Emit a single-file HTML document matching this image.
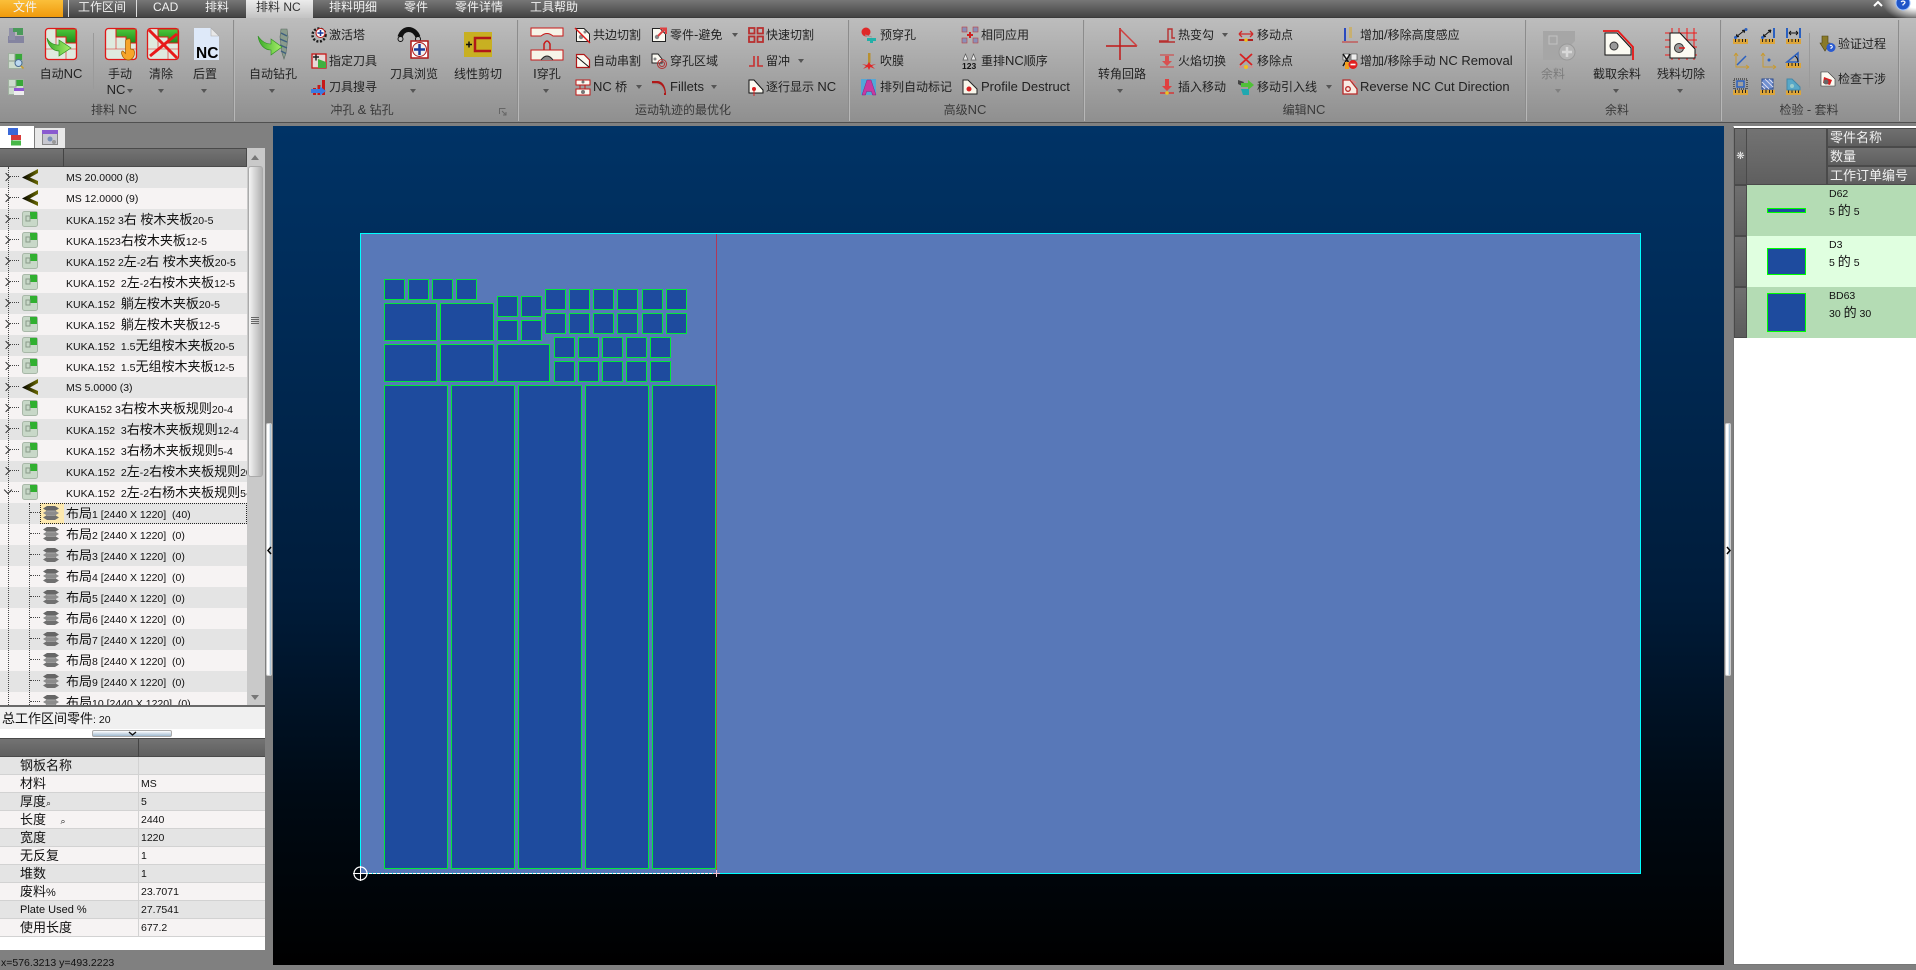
<!DOCTYPE html>
<html lang="zh"><head><meta charset="utf-8"><title>排料 NC</title>
<style>
*{box-sizing:border-box}
html,body{margin:0;padding:0}
body{width:1916px;height:965px;position:relative;overflow:hidden;background:#808080;font-family:"Liberation Sans","Noto Sans CJK SC",sans-serif;color:#1c1c1c}
.a{position:absolute}
#tabs{left:0;top:0;width:1916px;height:18px;background:linear-gradient(#767676,#434343);border-bottom:1px solid #3a3a3a}
.tb{position:absolute;top:-1px;line-height:17px;font-size:12px;color:#f2f2f2;white-space:pre}
#rib{left:0;top:18px;width:1916px;height:105px;background:linear-gradient(#bdbdbd,#8f8f8f);border-bottom:1px solid #505050}
.s{position:absolute;top:20px;height:101px;width:2px;background:linear-gradient(90deg,#777,#ccc)}
.t{position:absolute;font-size:12px;line-height:16px;white-space:pre;color:#222}
.c{transform:translateX(-50%)}
.t e,.vv e{font-size:13px}
e{font-style:normal}
.g{color:#3a3a3a;top:102px}
.v{position:absolute;width:0;height:0;border-left:3.5px solid transparent;border-right:3.5px solid transparent;border-top:4px solid #555}
#cv{left:273px;top:126px;width:1451px;height:839px;background:linear-gradient(#003366 0%,#002a55 24%,#001c3a 56%,#000a14 80%,#000 100%)}
#tree{left:0;top:167px;width:247px;height:538px;overflow:hidden;background:#f6f3f3}
#tree p{margin:0;position:relative;height:21px;font-size:10.5px;line-height:22px;white-space:pre;color:#111;overflow:hidden}
#tree p:nth-child(odd){background:#e4e4e4}
#tree p:nth-child(even){background:#f6f3f3}
#tree c{font-size:13px;color:#111}
#tree span{position:absolute;left:66px;top:0}
#tree svg{position:absolute;left:22px;top:2px;width:16px;height:16px}
#tree p.l svg{left:43px}
#tree p.l span{left:66px}
#tree p::after{content:"";position:absolute;left:10px;top:9px;width:9px;border-top:1px dotted #444}
#tree p.l::after{left:30px;width:10px}
#tree p.k::before{content:"";position:absolute;left:3px;top:7px;width:5px;height:5px;border-top:1.5px solid #333;border-right:1.5px solid #333;transform:rotate(45deg)}
#tree p.x::before{content:"";position:absolute;left:5px;top:5px;width:5px;height:5px;border-top:1.5px solid #333;border-right:1.5px solid #333;transform:rotate(135deg)}
#tree p.sel::before{content:"";position:absolute;left:40px;top:0;width:24px;height:21px;background:#fde9ae}
.hd{background:linear-gradient(#737373,#5f5f5f)}
#pg{left:0;top:757px;width:265px}
#pg p{margin:0;position:relative;height:18px;border-bottom:1px solid #d2d2d2;font-size:10.5px;line-height:18px;white-space:pre;color:#111}
#pg p:nth-child(odd){background:#e4e4e4}
#pg p:nth-child(even){background:#f6f3f3}
#pg b{font-weight:400;position:absolute;left:20px;top:0;font-size:13px}
#pg i{font-style:normal;position:absolute;left:141px;top:0}
#pg u{position:absolute;left:138px;top:0;width:1px;height:18px;background:#d2d2d2}
.rh{left:1734px;width:13px;background:linear-gradient(#6f6f6f,#5c5c5c);border:1px solid #4a4a4a}
.hc{left:1827px;width:89px;height:19px;background:linear-gradient(#707070,#5e5e5e);border:1px solid #4a4a4a;border-right:0;color:#f0f0f0;font-size:13px;line-height:17px;padding-left:2px;white-space:pre}
.row{left:1747px;width:169px;height:51px}
.pt{left:1767px;width:39px;background:#1e4b9e;border:1px solid #00ff00}
.rt{left:1829px;font-size:10.5px;line-height:16px;color:#111;white-space:pre}
.rt c{font-size:13px}
.hnd{position:absolute;background:linear-gradient(90deg,#fff 50%,#8fb0c8);border:1px solid #ccc;border-radius:2px}
</style></head><body>

<div class="a" id="tabs"></div>
<div class="a" style="left:0;top:0;width:63px;height:17px;background:linear-gradient(#fbbf3a,#f09a0c)"></div>
<div class="a" style="left:68px;top:0;width:1px;height:17px;background:#ddd"></div>
<div class="a" style="left:136px;top:0;width:1px;height:17px;background:#ddd"></div>
<div class="a" style="left:1870px;top:0;width:46px;height:18px;background:radial-gradient(ellipse 34px 20px at 100% 10%,#fff 30%,rgba(255,255,255,0) 100%)"></div>
<div class="a" style="left:246px;top:0;width:67px;height:19px;background:linear-gradient(#ececec,#c0c0c0)"></div>
<div class="tb" style="left:13px">文件</div>
<div class="tb" style="left:78px">工作区间</div>
<div class="tb" style="left:153px">CAD</div>
<div class="tb" style="left:205px">排料</div>
<div class="tb" style="left:256px;color:#333;font-size:12px">排料 NC</div>
<div class="tb" style="left:329px">排料明细</div>
<div class="tb" style="left:404px">零件</div>
<div class="tb" style="left:455px">零件详情</div>
<div class="tb" style="left:530px">工具帮助</div>
<svg class="a" style="left:1873px;top:0" width="43" height="14"><path d="M1 6l4-4 4 4" fill="none" stroke="#fff" stroke-width="2"/><circle cx="30" cy="3" r="7" fill="#1f55c8" stroke="#9cc0ff"/><path d="M28 2q2-2 4 0q0 1.500-2 2.500v1" fill="none" stroke="#fff" stroke-width="1.200"/></svg>

<div class="a" id="rib"></div>
<div class="s" style="left:233px"></div><div class="s" style="left:517px"></div><div class="s" style="left:848px"></div><div class="s" style="left:1083px"></div><div class="s" style="left:1525px"></div><div class="s" style="left:1720px"></div><div class="s" style="left:1898px"></div>
<div class="a" style="left:93px;top:33px;width:1px;height:56px;background:#9a9a9a"></div>
<div class="a" style="left:1809px;top:33px;width:1px;height:55px;background:#9a9a9a"></div>

<svg class="a" style="left:0;top:0" width="1916" height="123">
<defs>
<linearGradient id="gr" x1="0" y1="0" x2="0" y2="1"><stop offset="0" stop-color="#4cc83a"/><stop offset="1" stop-color="#1c8a1c"/></linearGradient>
<linearGradient id="ar" x1="0" y1="0" x2="1" y2="0"><stop offset="0" stop-color="#3aaa2a"/><stop offset="1" stop-color="#a8f06a"/></linearGradient>
<g id="nb"><rect x=".5" y=".5" width="31" height="31" rx="3" fill="#dfeadf" stroke="#e01818" stroke-width="1.300"/><path d="M11 1H31V15H21V9H11z" fill="url(#gr)" stroke="#e01818"/><path d="M1 21H31M11 1V21M21 21V31" stroke="#e01818" stroke-width=".6" fill="none"/></g>
<g id="tile"><path d="M1.500 1.500H9L14.500 7V14.500H1.500z" fill="#fbfaf2" stroke="#222"/><circle cx="6" cy="10" r="2.200" fill="#888"/></g>
<g id="rul"><rect x="0" y="11" width="15" height="5" fill="#dca53a"/><path d="M2.500 11v3M6 11v3M9.500 11v3M12.500 11v3" stroke="#222"/></g>
</defs>

<g transform="translate(8,27)"><rect x="0" y="9" width="16" height="7" fill="#8484a0"/><rect x="1" y="1" width="6" height="12" fill="#9090a8"/><path d="M5 1H15V8H9V5H5z" fill="#4a9a5a"/></g>
<g transform="translate(8,53)"><rect x=".5" y=".5" width="14" height="15" fill="#cddccd" stroke="#a0b0a0"/><rect x="7" y="1" width="7" height="6" fill="#38a838"/><path d="M1 8H7V1" fill="none" stroke="#8a9a8a"/><circle cx="10.500" cy="10" r="3.500" fill="#bcd8f0" stroke="#4a6a90"/><path d="M13 13l2.500 2.500" stroke="#c89a30" stroke-width="1.600"/></g>
<g transform="translate(8,79)"><rect x=".5" y=".5" width="15" height="15" fill="#cddccd" stroke="#a0b0a0"/><rect x="8" y="1" width="7" height="6" fill="#38a838"/><path d="M1 8H8V1" fill="none" stroke="#8a9a8a"/><rect x="6" y="9" width="10" height="3" fill="#9058d0"/><rect x="6" y="12" width="10" height="4" fill="#eee"/></g>

<g transform="translate(45,28)"><use href="#nb"/><path d="M2 14C5 20 10 21 14 21V16L26 24 14 32V27C8 27 3 22 2 14z" fill="url(#ar)" stroke="#2f8f22" stroke-width=".7" transform="translate(0,-4)"/></g>
<g transform="translate(105,28)"><use href="#nb"/><path d="M23 11c1.500-1 2.500 0 2.500 2V21c3 0 4 1 4 4 0 4-3 7-6 7s-6-2-7-7c0-2 1-2.500 2-1.500l2 2V13c0-1 .7-1.700 2.500-2z" fill="#f6a52a" stroke="#a05a00" stroke-width=".7"/></g>
<g transform="translate(147,28)"><use href="#nb"/><path d="M2 2L30 30M30 6L3 28" stroke="#e81a1a" stroke-width="3" fill="none"/></g>
<g transform="translate(194,28)"><path d="M0 0H17L25 8V32H0z" fill="#f4f8ff"/><path d="M0 0H17L25 8V32H0z" fill="#cfe0f5" opacity=".6"/><path d="M17 0V8H25z" fill="#e8e8e8" stroke="#aaa" stroke-width=".6"/><text x="2" y="30" font-family="Liberation Sans" font-weight="700" font-size="15.500" fill="#000">NC</text></g>

<g transform="translate(257,28)"><path d="M24 1h6l1 8-1 8-1 8-2 6-2-6-1-8-1-8z" fill="#8a9c8c" stroke="#5a6a62" stroke-width=".6"/><path d="M24 5l6 3M23 11l7 3M23 17l7 3M24 23l5 2.500" stroke="#3f5f80" stroke-width="1.400"/><path d="M1 8C5 14 10 16 14 16V11L25 19 14 27V22C7 22 2 16 1 8z" fill="url(#ar)" stroke="#2f8f22" stroke-width=".6"/></g>

<g transform="translate(311,27)"><circle cx="8" cy="8" r="6.500" fill="none" stroke="#1a1a1a" stroke-width="2.500" stroke-dasharray="2 1.600"/><circle cx="9.500" cy="6" r="4.500" fill="#fff" stroke="#c01818"/><path d="M6.500 6h6M9.500 3v6" stroke="#1a3a9a" stroke-width="1.500"/></g>
<g transform="translate(311,53)"><rect x="1" y="1" width="14" height="14" fill="#e8d8d8" stroke="#c81818" stroke-width="1.300"/><path d="M7 6L15 9V15H7z" fill="#40b040"/><path d="M2 4h6M5 1.500v6" stroke="#222" stroke-width="1.500"/></g>
<g transform="translate(311,79)"><rect x="2" y="9" width="3" height="7" fill="#c81818"/><rect x="6.500" y="6" width="3" height="10" fill="#c81818"/><rect x="11" y="1" width="3" height="15" fill="#c81818"/><path d="M0 10H9V7.500L15 12 9 16.500V14H0z" fill="#3a7ae0"/></g>

<g transform="translate(398,28)"><path d="M2 9C5-1 16-1 20 9" fill="none" stroke="#111" stroke-width="5"/><circle cx="2.500" cy="11" r="2.500" fill="#bbb" stroke="#111"/><circle cx="20" cy="11" r="2.500" fill="#bbb" stroke="#111"/><rect x="13" y="13" width="17" height="17" fill="#fff" stroke="#b01818" stroke-width="1.500"/><circle cx="21.500" cy="21.500" r="7" fill="#f2f2f2" stroke="#b01818"/><path d="M16 21.500h11M21.500 16v11" stroke="#1a3a9a" stroke-width="2.500"/></g>
<g transform="translate(464,32)"><rect x="0" y="0" width="28" height="25" fill="#c8b022"/><path d="M27 6H11V19H27" fill="none" stroke="#b01818" stroke-width="2.500"/><path d="M2 12.500h6M5 9.500v6" stroke="#111" stroke-width="1.500"/></g>

<g transform="translate(531,28)"><path d="M0 0H32V8H22Q16 3 10 8H0z" fill="#f6f4e8" stroke="#c81818"/><path d="M0 22H32V32H0z" fill="#f6f4e8" stroke="#c81818"/><path d="M10 32Q16 24 22 32" fill="#888" stroke="#222"/><path d="M13 22V16Q16 10 19 16V22" fill="none" stroke="#c81818" stroke-width="1.500"/></g>
<g transform="translate(575,27)"><use href="#tile"/><circle cx="10" cy="5" r="1.500" fill="#888"/><path d="M0 1L15 16" stroke="#e01818" stroke-width="1.400"/></g>
<g transform="translate(575,53)"><path d="M1.500 1.500H9L14.500 7V14.500H1.500z" fill="#fbfaf2" stroke="#b01818" stroke-width="1.200"/><path d="M2 4L14 14" stroke="#111"/></g>
<g transform="translate(575,79)"><path d="M1 1H15V6H1zM1 10H15V16H1z" fill="#fbfaf2" stroke="#c01818"/><path d="M5 6V10M10 6V10" stroke="#c01818"/><circle cx="8" cy="13" r="2" fill="#777"/><circle cx="8" cy="3" r="1.500" fill="#777"/></g>

<g transform="translate(651,27)"><use href="#tile"/><path d="M7 9L14 2M9 1.500H15V7" fill="none" stroke="#e04040" stroke-width="2"/></g>
<g transform="translate(651,53)"><path d="M1 1H7L11 6V10H1z" fill="#fbfaf2" stroke="#222"/><circle cx="4" cy="6" r="1.500" fill="#888"/><circle cx="11" cy="11" r="4.500" fill="none" stroke="#b03030"/><circle cx="11" cy="11" r="2.500" fill="none" stroke="#b03030"/></g>
<g transform="translate(651,79)"><path d="M1 2H7Q14 3 15 14V16H13V14Q12 6 6 5H1z" fill="#b01818"/><path d="M1 5H6Q12 6 13 14" fill="none" stroke="#999" stroke-width="1.500"/></g>

<g transform="translate(748,27)" fill="none" stroke="#b83030" stroke-width="1.800"><rect x="1" y="1" width="5.500" height="5.500"/><rect x="9.500" y="1" width="5.500" height="5.500"/><rect x="1" y="9.500" width="5.500" height="5.500"/><rect x="9.500" y="9.500" width="5.500" height="5.500"/></g>
<g transform="translate(748,53)" fill="none" stroke="#c83030" stroke-width="1.600"><path d="M6 3V13H1M10 3V13H15"/></g>
<g transform="translate(748,79)"><path d="M1 1H6L15 11V14H1z" fill="#fbfaf2" stroke="#111"/><circle cx="6" cy="10" r="2" fill="#d82020"/><path d="M6 10V17" stroke="#d82020"/></g>

<g transform="translate(861,27)"><circle cx="5" cy="5" r="4.500" fill="#e02828"/><path d="M4 8L11 10" stroke="#999"/><path d="M6 11H15V14H12V16H9V14H6z" fill="#22b0a8"/></g>
<g transform="translate(861,53)"><rect x="7" y="0" width="2.500" height="10" fill="#b89030"/><path d="M8 9L10 12 15 11 11 13 14 16 9.500 14 8 17 6.500 14 2 16 5 13 1 11 6 12z" fill="#e02828"/></g>
<g transform="translate(861,79)"><path d="M0 0H15V16H0z" fill="#52a8d8"/><path d="M1 16L6 1H10L15 16H11.500L10.500 12.500H5.500L4.500 16z" fill="#c83aa0" stroke="#7a2a80" stroke-width=".5"/></g>

<g transform="translate(962,27)"><g fill="#8a8fb8" stroke="#c04040" stroke-width=".6"><rect x="0" y="0" width="5" height="5"/><rect x="11" y="0" width="5" height="5"/><rect x="0" y="11" width="5" height="5"/><rect x="11" y="11" width="5" height="5"/></g><path d="M5 8h6M8 5v6" stroke="#d02020" stroke-width="2"/></g>
<g transform="translate(962,53)"><path d="M1 7L3.500 1 6 7zM9 7L11.500 1 14 7z" fill="#eee" stroke="#555" stroke-width=".7"/><text x="0" y="16" font-family="Liberation Sans" font-weight="700" font-size="8.500" fill="#111">123</text></g>
<g transform="translate(962,79)"><path d="M1 1H6L15 10V15H1z" fill="#f8f6ea" stroke="#222"/><circle cx="7" cy="10" r="2.500" fill="#d82020"/></g>

<g transform="translate(1106,28)" fill="none" stroke="#c01818"><path d="M0 18H31" stroke-width="1.500"/><path d="M14 0V32" stroke-width="1.500"/><path d="M14 1L31 18" stroke-width="1.500" stroke="#d04040"/></g>

<g transform="translate(1159,27)" fill="none" stroke="#b83030" stroke-width="1.400"><path d="M0 14H9V2H13V11H16M0 15H16"/></g>
<g transform="translate(1159,53)"><path d="M1 2H15M1 14H15" stroke="#c86060" stroke-width="1.400"/><path d="M6 3H10V8H13L8 13 3 8H6z" fill="#d85050"/></g>
<g transform="translate(1159,79)"><path d="M6 0H10V7H13L8 12 3 7H6z" fill="#e04040"/><path d="M1 14H15" stroke="#d83030" stroke-width="1.400"/><circle cx="8" cy="14" r="1.800" fill="#f0c020"/></g>
<g transform="translate(1238,27)"><path d="M1 7H15M1 7L4 4M1 7L4 10M15 7L12 4M15 7L12 10" fill="none" stroke="#d02828" stroke-width="1.300"/><path d="M1 13H15" stroke="#b02020" stroke-width="2"/><circle cx="8" cy="13" r="1.800" fill="#f0c020"/></g>
<g transform="translate(1238,53)"><path d="M2 1L14 12M14 1L2 12" stroke="#d82020" stroke-width="1.800"/><path d="M1 14H15" stroke="#d88" stroke-width="1.200"/><circle cx="8" cy="14" r="2" fill="#f0c020"/></g>
<g transform="translate(1238,79)"><path d="M0 1L6 3 4 7 0 5z" fill="#444"/><path d="M3 4H10V1L16 6 10 11V8H3z" fill="#50c038"/><path d="M3 10H11V16H5z" fill="#20a8b0"/></g>
<g transform="translate(1342,27)"><path d="M3 1V14" stroke="#2a4ac0" stroke-width="2"/><rect x="7" y="0" width="3" height="11" fill="#c8b070"/><path d="M0 15H16" stroke="#c83030"/></g>
<g transform="translate(1342,53)"><path d="M1 1H7V7H1zM9 1H15V7H9z" fill="#eee" stroke="#333" stroke-width=".6"/><path d="M1 1L9 13M8 1L1 13" stroke="#111" stroke-width="1.500"/><path d="M3 9H7V16H3z" fill="#f0a020"/><circle cx="11" cy="11.500" r="4.500" fill="#e02020"/><path d="M8.500 11.500h5" stroke="#fff" stroke-width="1.600"/></g>
<g transform="translate(1342,79)"><path d="M1 1H8L15 10V15H1z" fill="#f8ece4" stroke="#b82828" stroke-width="1.300"/><circle cx="6" cy="10" r="2.300" fill="none" stroke="#b82828" stroke-width="1.300"/><path d="M9 1L14 4" stroke="#d88" stroke-width="1.500"/></g>

<g transform="translate(1543,31)"><path d="M0 0H32V10L28 14V29H0z" fill="#a6a6a6"/><rect x="6" y="5" width="8" height="8" fill="none" stroke="#c2c2c2"/><circle cx="24" cy="21" r="8" fill="#b5b5b5" stroke="#999"/><path d="M19 21h10M24 16v10" stroke="#d8d8d8" stroke-width="2.500"/></g>
<g transform="translate(1603,30)"><path d="M2 3H14L28 18V25H2z" fill="#fbfaf2" stroke="#111"/><path d="M0 1H15L30 17V30" fill="none" stroke="#e81818" stroke-width="1.800"/><circle cx="11" cy="16" r="4" fill="#999" stroke="#333"/></g>
<g transform="translate(1665,28)"><path d="M0 5H32M0 12H32M0 19H32M0 27H32M7 0V32M14 0V32M22 0V32M29 0V32" stroke="#f01818" stroke-width="1"/><path d="M5 5H15L30 21V30H5z" fill="#fbfaf2" stroke="#111"/><circle cx="14" cy="20" r="4.500" fill="#999" stroke="#333"/><path d="M14 20H20" stroke="#e01818" stroke-width="1.500"/></g>

<g transform="translate(1733,28)"><use href="#rul"/><path d="M3 9L12 2M3 9l1-3M3 9l3-.5M12 2l-1 3M12 2l-3 .5" stroke="#111" fill="none"/><circle cx="2.500" cy="9.500" r="1.500" fill="#2a60c0"/><circle cx="13" cy="1.500" r="1.500" fill="#2a60c0"/></g>
<g transform="translate(1760,28)"><use href="#rul"/><path d="M3 9L11 2M3 9l1-3M3 9l3-.5M11 2l-1 3M11 2l-3 .5" stroke="#111" fill="none"/><rect x="13" y="0" width="2" height="10" fill="#2a60c0"/><circle cx="2.500" cy="9.500" r="1.500" fill="#2a60c0"/></g>
<g transform="translate(1786,28)"><use href="#rul"/><path d="M1 0V10M14 0V10" stroke="#2a60c0" stroke-width="2"/><path d="M3 5H12M3 5l2-2M3 5l2 2M12 5l-2-2M12 5l-2 2" stroke="#111" fill="none"/></g>
<g transform="translate(1733,52)" fill="none"><path d="M3 1V15H16M3 1L1 4M3 1L5 4M16 15l-3-2M16 15l-3 2" stroke="#c89a30"/><path d="M4 13L13 4" stroke="#2a60c0" stroke-width="1.500"/></g>
<g transform="translate(1760,52)" fill="none"><path d="M3 1V15H16M3 1L1 4M3 1L5 4M16 15l-3-2M16 15l-3 2" stroke="#c89a30"/><circle cx="9" cy="8" r="1.500" fill="#2a60c0"/></g>
<g transform="translate(1786,52)"><use href="#rul"/><path d="M1 10L12 1V10z" fill="none" stroke="#2a60c0" stroke-width="1.500"/><path d="M9 4Q12 6 12 10" fill="none" stroke="#111"/></g>
<g transform="translate(1733,79)"><use href="#rul"/><rect x="1" y="0" width="13" height="10" fill="none" stroke="#111" stroke-dasharray="1 1"/><rect x="4" y="2" width="7" height="6" fill="none" stroke="#2a60c0" stroke-width="1.500"/></g>
<g transform="translate(1760,79)"><use href="#rul"/><rect x="2" y="0" width="11" height="10" fill="#7090d0" stroke="#2a4a90"/><path d="M2 3L9 10M5 0L13 8M2 7L5 10M9 0L13 4" stroke="#dde" /></g>
<g transform="translate(1786,79)"><use href="#rul"/><path d="M1 0H6L14 8V11H1z" fill="#58a8c8" stroke="#4488a8"/><circle cx="6" cy="7" r="2" fill="#9cc"/></g>

<g transform="translate(1820,36)"><path d="M2 0H8V7H10L5 15 0 7H2z" fill="#8a7a28" stroke="#4a4010" stroke-width=".6"/><circle cx="11" cy="11.500" r="4.500" fill="#2a5ad0"/><path d="M10 10q1-1.500 2 0t-1 2v1" stroke="#fff" fill="none"/></g>
<g transform="translate(1820,71)"><path d="M1 1H8L15 8V15H1z" fill="#fbfaf2" stroke="#333" stroke-width=".6"/><path d="M4 6L12 9 10 14 3 12z" fill="#d82020"/><circle cx="6" cy="11" r="2.500" fill="#666"/></g>
</svg>

<div class="t c" style="left:61px;top:66px">自动<e>NC</e></div>
<div class="t c" style="left:120px;top:66px">手动</div><div class="t c" style="left:116px;top:82px"><e>NC</e></div><div class="v" style="left:127px;top:89px"></div>
<div class="t c" style="left:161px;top:66px">清除</div><div class="v" style="left:158px;top:89px"></div>
<div class="t c" style="left:205px;top:66px">后置</div><div class="v" style="left:201px;top:89px"></div>
<div class="t c" style="left:273px;top:66px">自动钻孔</div><div class="v" style="left:269px;top:89px"></div>
<div class="t" style="left:329px;top:27px">激活塔</div><div class="t" style="left:329px;top:53px">指定刀具</div><div class="t" style="left:329px;top:79px">刀具搜寻</div>
<div class="t c" style="left:414px;top:66px">刀具浏览</div><div class="v" style="left:410px;top:89px"></div>
<div class="t c" style="left:478px;top:66px">线性剪切</div>
<div class="t c" style="left:547px;top:66px"><e>I</e>穿孔</div><div class="v" style="left:543px;top:89px"></div>
<div class="t" style="left:593px;top:27px">共边切割</div><div class="t" style="left:593px;top:53px">自动串割</div><div class="t" style="left:593px;top:79px"><e>NC</e> 桥</div><div class="v" style="left:636px;top:85px"></div>
<div class="t" style="left:670px;top:27px">零件<e>-</e>避免</div><div class="v" style="left:732px;top:33px"></div><div class="t" style="left:670px;top:53px">穿孔区域</div><div class="t" style="left:670px;top:79px"><e>Fillets</e></div><div class="v" style="left:711px;top:85px"></div>
<div class="t" style="left:766px;top:27px">快速切割</div><div class="t" style="left:766px;top:53px">留冲</div><div class="v" style="left:798px;top:59px"></div><div class="t" style="left:766px;top:79px">逐行显示 <e>NC</e></div>
<div class="t" style="left:880px;top:27px">预穿孔</div><div class="t" style="left:880px;top:53px">吹膜</div><div class="t" style="left:880px;top:79px">排列自动标记</div>
<div class="t" style="left:981px;top:27px">相同应用</div><div class="t" style="left:981px;top:53px">重排<e>NC</e>顺序</div><div class="t" style="left:981px;top:79px"><e>Profile Destruct</e></div>
<div class="t c" style="left:1122px;top:66px">转角回路</div><div class="v" style="left:1117px;top:89px"></div>
<div class="t" style="left:1178px;top:27px">热变勾</div><div class="v" style="left:1222px;top:33px"></div><div class="t" style="left:1178px;top:53px">火焰切换</div><div class="t" style="left:1178px;top:79px">插入移动</div>
<div class="t" style="left:1257px;top:27px">移动点</div><div class="t" style="left:1257px;top:53px">移除点</div><div class="t" style="left:1257px;top:79px">移动引入线</div><div class="v" style="left:1326px;top:85px"></div>
<div class="t" style="left:1360px;top:27px">增加<e>/</e>移除高度感应</div><div class="t" style="left:1360px;top:53px">增加<e>/</e>移除手动 <e>NC Removal</e></div><div class="t" style="left:1360px;top:79px"><e>Reverse NC Cut Direction</e></div>
<div class="t c" style="left:1553px;top:66px;color:#7c7c7c">余料</div><div class="v" style="left:1555px;top:89px;border-top-color:#808080"></div>
<div class="t c" style="left:1617px;top:66px">截取余料</div><div class="v" style="left:1613px;top:89px"></div>
<div class="t c" style="left:1681px;top:66px">残料切除</div><div class="v" style="left:1677px;top:89px"></div>
<div class="t" style="left:1838px;top:36px">验证过程</div><div class="t" style="left:1838px;top:71px">检查干涉</div>

<div class="t c g" style="left:114px">排料 <e>NC</e></div>
<div class="t c g" style="left:362px">冲孔 <e>&amp;</e> 钻孔</div>
<div class="t c g" style="left:683px">运动轨迹的最优化</div>
<div class="t c g" style="left:965px">高级<e>NC</e></div>
<div class="t c g" style="left:1304px">编辑<e>NC</e></div>
<div class="t c g" style="left:1617px">余料</div>
<div class="t c g" style="left:1809px">检验 <e>-</e> 套料</div>
<svg class="a" style="left:499px;top:108px" width="8" height="8"><path d="M.5 6V.5H6.500" fill="none" stroke="#666"/><path d="M3 3l4 4M7 4v3H4" fill="none" stroke="#666"/></svg>

<!-- canvas -->
<div class="a" id="cv"></div>
<svg class="a" style="left:0;top:0" width="1916" height="965" shape-rendering="crispEdges">
<rect x="360.500" y="233.500" width="1280" height="640" fill="#5878b8" stroke="#00ffff"/>
<g fill="#1e4b9e" stroke="#00e838">
<rect x="384.500" y="279.500" width="20" height="20"/><rect x="408.500" y="279.500" width="20" height="20"/><rect x="432.500" y="279.500" width="20" height="20"/><rect x="456.500" y="279.500" width="20" height="20"/>
<rect x="384.500" y="303.500" width="52" height="37"/><rect x="440.500" y="303.500" width="53" height="37"/>
<rect x="384.500" y="344.500" width="52" height="37"/><rect x="440.500" y="344.500" width="53" height="37"/><rect x="497.500" y="344.500" width="52" height="37"/>
<rect x="497.500" y="296.500" width="20" height="20"/><rect x="521.500" y="296.500" width="20" height="20"/><rect x="497.500" y="320.500" width="20" height="20"/><rect x="521.500" y="320.500" width="20" height="20"/>
<rect x="545.500" y="289.500" width="20" height="20"/><rect x="569.500" y="289.500" width="20" height="20"/><rect x="593.500" y="289.500" width="20" height="20"/><rect x="617.500" y="289.500" width="20" height="20"/><rect x="642.500" y="289.500" width="20" height="20"/><rect x="666.500" y="289.500" width="20" height="20"/>
<rect x="545.500" y="313.500" width="20" height="20"/><rect x="569.500" y="313.500" width="20" height="20"/><rect x="593.500" y="313.500" width="20" height="20"/><rect x="617.500" y="313.500" width="20" height="20"/><rect x="642.500" y="313.500" width="20" height="20"/><rect x="666.500" y="313.500" width="20" height="20"/>
<rect x="554.500" y="337.500" width="20" height="20"/><rect x="578.500" y="337.500" width="20" height="20"/><rect x="602.500" y="337.500" width="20" height="20"/><rect x="626.500" y="337.500" width="20" height="20"/><rect x="650.500" y="337.500" width="20" height="20"/>
<rect x="554.500" y="361.500" width="20" height="20"/><rect x="578.500" y="361.500" width="20" height="20"/><rect x="602.500" y="361.500" width="20" height="20"/><rect x="626.500" y="361.500" width="20" height="20"/><rect x="650.500" y="361.500" width="20" height="20"/>
<rect x="384.500" y="385.500" width="63" height="483"/><rect x="451.500" y="385.500" width="63" height="483"/><rect x="518.500" y="385.500" width="63" height="483"/><rect x="585.500" y="385.500" width="63" height="483"/><rect x="652.500" y="385.500" width="63" height="483"/>
</g>
<path d="M716.500 234V386" stroke="#b03858" fill="none"/><path d="M716.500 386V873" stroke="#a8602e" fill="none"/>
<path d="M361 873.500H716" stroke="#fff" stroke-dasharray="3 1" fill="none"/>
<path d="M716.500 870V877M713 873.500H720" stroke="#f0c0d0" fill="none"/>
</svg>
<svg class="a" style="left:350px;top:863px" width="21" height="21"><circle cx="10.500" cy="10.500" r="6.500" fill="none" stroke="#fff" stroke-width="1.200"/><path d="M10.500 3V18M3 10.500H18" stroke="#fff"/></svg>

<!-- left panel -->
<div class="a" style="left:0;top:126px;width:34px;height:23px;background:#fff"></div>
<div class="a" style="left:35px;top:128px;width:30px;height:21px;background:#e8e8e8"></div>
<svg class="a" style="left:6px;top:128px" width="16" height="18"><rect x="2" y="0" width="10" height="7" fill="#3a68d8"/><path d="M6 7V15" stroke="#555"/><rect x="5" y="7" width="10" height="5" fill="#d83a3a"/><rect x="5" y="12.500" width="10" height="5" fill="#48b848"/></svg>
<svg class="a" style="left:42px;top:130px" width="16" height="16"><rect x=".5" y=".5" width="15" height="14" fill="#c8c8d0" stroke="#888"/><rect x="0" y="0" width="16" height="4" fill="#8a5ad0"/><circle cx="8" cy="9" r="2.500" fill="#7a90b8"/><circle cx="12" cy="12" r="2" fill="#999"/></svg>
<div class="a hd" style="left:0;top:148px;width:247px;height:19px;border:1px solid #4a4a4a;border-left:0"></div>
<div class="a" style="left:63px;top:149px;width:1px;height:18px;background:#444"></div>
<div class="a" style="left:247px;top:148px;width:18px;height:557px;background:#c9c9c9"></div>
<div class="a" style="left:248px;top:166px;width:15px;height:311px;border:1px solid #aaa;border-radius:3px;background:linear-gradient(90deg,#f4f4f4,#b0b0b0)"></div>
<div class="a" style="left:251px;top:317px;width:8px;height:7px;background:repeating-linear-gradient(#666 0 1px,transparent 1px 2px)"></div>
<div class="a" style="left:251px;top:155px;width:0;height:0;border-left:4.500px solid transparent;border-right:4.500px solid transparent;border-bottom:5px solid #777"></div>
<div class="a" style="left:251px;top:695px;width:0;height:0;border-left:4.500px solid transparent;border-right:4.500px solid transparent;border-top:5px solid #777"></div>

<svg width="0" height="0" style="position:absolute"><defs>
<linearGradient id="sh" x1="0" y1="0" x2="1" y2="0"><stop offset="0" stop-color="#000"/><stop offset="1" stop-color="#6a6a00"/></linearGradient>
<symbol id="sv" viewBox="0 0 16 16"><path d="M16 0L0 8.500 16 16V12L8 8.500 16 4z" fill="url(#sh)"/></symbol>
<symbol id="nn" viewBox="0 0 16 16"><rect x=".5" y=".5" width="15" height="15" rx="2" fill="#c8d8c8" stroke="#a8b8a8"/><rect x="8" y="1" width="7" height="7" fill="#30b030"/><path d="M4 5H8V10H4z" fill="none" stroke="#8a9a8a"/></symbol>
<symbol id="ly" viewBox="0 0 16 16"><path d="M0 3.500L4 1H12L16 3.500 12 6H4z" fill="#666"/><path d="M0 8L4 5.500H12L16 8 12 10.500H4z" fill="#8c8c8c"/><path d="M0 12.500L4 10H12L16 12.500 12 15H4z" fill="#707070"/><path d="M4 6H12M4 10.500H12" stroke="#c4c4c4" stroke-width=".6"/></symbol>
</defs></svg>

<div class="a" id="tree">
<p class="k"><svg><use href="#sv"/></svg><span>MS 20.0000 (8)</span></p>
<p class="k"><svg><use href="#sv"/></svg><span>MS 12.0000 (9)</span></p>
<p class="k"><svg><use href="#nn"/></svg><span>KUKA.152 3<c>右 桉木夹板</c>20-5</span></p>
<p class="k"><svg><use href="#nn"/></svg><span>KUKA.1523<c>右桉木夹板</c>12-5</span></p>
<p class="k"><svg><use href="#nn"/></svg><span>KUKA.152 2<c>左</c>-2<c>右 桉木夹板</c>20-5</span></p>
<p class="k"><svg><use href="#nn"/></svg><span>KUKA.152  2<c>左</c>-2<c>右桉木夹板</c>12-5</span></p>
<p class="k"><svg><use href="#nn"/></svg><span>KUKA.152  <c>躺左桉木夹板</c>20-5</span></p>
<p class="k"><svg><use href="#nn"/></svg><span>KUKA.152  <c>躺左桉木夹板</c>12-5</span></p>
<p class="k"><svg><use href="#nn"/></svg><span>KUKA.152  1.5<c>无组桉木夹板</c>20-5</span></p>
<p class="k"><svg><use href="#nn"/></svg><span>KUKA.152  1.5<c>无组桉木夹板</c>12-5</span></p>
<p class="k"><svg><use href="#sv"/></svg><span>MS 5.0000 (3)</span></p>
<p class="k"><svg><use href="#nn"/></svg><span>KUKA152 3<c>右桉木夹板规则</c>20-4</span></p>
<p class="k"><svg><use href="#nn"/></svg><span>KUKA.152  3<c>右桉木夹板规则</c>12-4</span></p>
<p class="k"><svg><use href="#nn"/></svg><span>KUKA.152  3<c>右杨木夹板规则</c>5-4</span></p>
<p class="k"><svg><use href="#nn"/></svg><span>KUKA.152  2<c>左</c>-2<c>右桉木夹板规则</c>20-4</span></p>
<p class="x"><svg><use href="#nn"/></svg><span>KUKA.152  2<c>左</c>-2<c>右杨木夹板规则</c>5-4</span></p>
<p class="l sel"><svg><use href="#ly"/></svg><span><c>布局</c>1 [2440 X 1220]  (40)</span></p>
<p class="l"><svg><use href="#ly"/></svg><span><c>布局</c>2 [2440 X 1220]  (0)</span></p>
<p class="l"><svg><use href="#ly"/></svg><span><c>布局</c>3 [2440 X 1220]  (0)</span></p>
<p class="l"><svg><use href="#ly"/></svg><span><c>布局</c>4 [2440 X 1220]  (0)</span></p>
<p class="l"><svg><use href="#ly"/></svg><span><c>布局</c>5 [2440 X 1220]  (0)</span></p>
<p class="l"><svg><use href="#ly"/></svg><span><c>布局</c>6 [2440 X 1220]  (0)</span></p>
<p class="l"><svg><use href="#ly"/></svg><span><c>布局</c>7 [2440 X 1220]  (0)</span></p>
<p class="l"><svg><use href="#ly"/></svg><span><c>布局</c>8 [2440 X 1220]  (0)</span></p>
<p class="l"><svg><use href="#ly"/></svg><span><c>布局</c>9 [2440 X 1220]  (0)</span></p>
<p class="l"><svg><use href="#ly"/></svg><span><c>布局</c>10 [2440 X 1220]  (0)</span></p>
</div>
<div class="a" style="left:8px;top:167px;height:538px;border-left:1px dotted #444"></div>
<div class="a" style="left:29px;top:503px;height:202px;border-left:1px dotted #444"></div>
<div class="a" style="left:40px;top:503px;width:207px;height:21px;border:1px dotted #222"></div>

<div class="a" style="left:0;top:705px;width:265px;height:24px;background:#f0f0f0;border-top:2px solid #6a6a6a;font-size:10.5px;line-height:24px;white-space:pre;padding-left:2px;color:#111"><span style="font-size:13px">总工作区间零件</span>: 20</div>
<div class="a" style="left:0;top:729px;width:265px;height:9px;background:#fff"></div>
<div class="a" style="left:92px;top:730px;width:80px;height:7px;border:1px solid #aaa;border-radius:2px;background:linear-gradient(#fff,#9fbad0)"></div>
<svg class="a" style="left:128px;top:731px" width="9" height="5"><path d="M1 1L4.500 4 8 1" fill="none" stroke="#111" stroke-width="1.400"/></svg>
<div class="a hd" style="left:0;top:738px;width:265px;height:19px;border-top:1px solid #4a4a4a;border-bottom:1px solid #4a4a4a"></div>
<div class="a" style="left:138px;top:739px;width:1px;height:18px;background:#444"></div>
<div class="a" id="pg">
<p><b>钢板名称</b><u></u></p>
<p><b>材料</b><u></u><i>MS</i></p>
<p><b>厚度<span style="font-size:9px">⌕</span></b><u></u><i>5</i></p>
<p><b>长度    <span style="font-size:9px">⌕</span></b><u></u><i>2440</i></p>
<p><b>宽度</b><u></u><i>1220</i></p>
<p><b>无反复</b><u></u><i>1</i></p>
<p><b>堆数</b><u></u><i>1</i></p>
<p><b>废料<span style="font-size:11px">%</span></b><u></u><i>23.7071</i></p>
<p><b style="font-size:11px">Plate Used %</b><u></u><i>27.7541</i></p>
<p><b>使用长度</b><u></u><i>677.2</i></p>
</div>
<div class="a" style="left:0;top:937px;width:265px;height:13px;background:#fff"></div>
<div class="a" style="left:1px;top:956px;font-size:10.5px;line-height:14px;color:#111;white-space:pre">x=576.3213 y=493.2223</div>

<div class="hnd" style="left:266px;top:423px;width:6px;height:253px"></div>
<svg class="a" style="left:267px;top:546px" width="5" height="9"><path d="M4 1L1 4.500 4 8" fill="none" stroke="#000" stroke-width="1.500"/></svg>
<div class="hnd" style="left:1725px;top:423px;width:6px;height:253px"></div>
<svg class="a" style="left:1726px;top:546px" width="5" height="9"><path d="M1 1L4 4.500 1 8" fill="none" stroke="#000" stroke-width="1.500"/></svg>

<!-- right panel -->
<div class="a" style="left:1733px;top:126px;width:183px;height:839px;background:#fff;border:1px solid #777;border-right:0;border-top:1px solid #fff"></div>
<div class="a rh" style="top:128px;height:57px;color:#eee;font-size:10px;line-height:55px;text-align:center;padding:0">❋</div>
<div class="a hd" style="left:1747px;top:128px;width:80px;height:57px;border:1px solid #4a4a4a;border-left:0"></div>
<div class="a hc" style="top:128px">零件名称</div>
<div class="a hc" style="top:147px">数量</div>
<div class="a hc" style="top:166px">工作订单编号</div>
<div class="a rh" style="top:185px;height:51px"></div><div class="a rh" style="top:236px;height:51px"></div><div class="a rh" style="top:287px;height:51px"></div>
<div class="a row" style="top:185px;background:#b4dcb4"></div>
<div class="a row" style="top:236px;background:#e0ffe0"></div>
<div class="a row" style="top:287px;background:#b4dcb4"></div>
<div class="a pt" style="top:208px;height:5px"></div>
<div class="a pt" style="top:248px;height:27px"></div>
<div class="a pt" style="top:293px;height:39px"></div>
<div class="a rt" style="top:186px">D62</div><div class="a rt" style="top:203px">5 <c>的</c> 5</div>
<div class="a rt" style="top:237px">D3</div><div class="a rt" style="top:254px">5 <c>的</c> 5</div>
<div class="a rt" style="top:288px">BD63</div><div class="a rt" style="top:305px">30 <c>的</c> 30</div>

</body></html>
